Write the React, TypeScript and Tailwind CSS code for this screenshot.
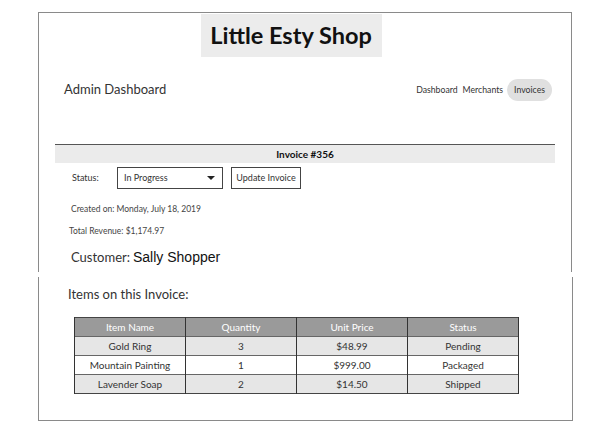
const items = [
  { name: 'Gold Ring', qty: '3', price: '$48.99', status: 'Pending' },
  { name: 'Mountain Painting', qty: '1', price: '$999.00', status: 'Packaged' },
  { name: 'Lavender Soap', qty: '2', price: '$14.50', status: 'Shipped' },
];

export default function App() {
  return (
    <div className="min-h-[445px] w-[604px] bg-white pt-3 font-['Lato',sans-serif] text-[#333]">
      {/* upper half of the page */}
      <div className="ml-[38px] w-[534px] border-x-[1.5px] border-t-[1.5px] border-[#8a8a8a] pb-[5px]">
        <div className="flex justify-center pt-[1px]">
          <div className="ml-[-28px] flex h-[43px] w-[181px] items-center justify-center bg-[#ececec]">
            <h1 className="text-[23.5px] font-bold text-[#111]">Little Esty Shop</h1>
          </div>
        </div>

        <div className="mt-[22px] flex h-[22px] items-center justify-between pl-[25px] pr-[19px]">
          <div className="text-[13px] text-[#333]">Admin Dashboard</div>
          <nav className="flex items-center text-[8.7px] text-[#333]">
            <span className="mr-[5px]">Dashboard</span>
            <span className="mr-[4px]">Merchants</span>
            <span className="flex h-[22px] items-center rounded-full bg-[#e0e0e0] px-[7px]">Invoices</span>
          </nav>
        </div>

        <div className="mx-[16px] mt-[43px] h-[19px] border-t border-[#555] bg-[#ebebeb] text-center text-[10px] leading-[18px] font-bold text-[#111]">
          Invoice #356
        </div>

        <div className="mt-[4px] flex h-[22px] items-center pl-[33px] text-[9px]">
          <span className="w-[45px]">Status:</span>
          <div className="flex h-[22px] w-[106px] items-center justify-between border border-[#444] pl-[6px] pr-[7px]">
            <span>In Progress</span>
            <svg width="8" height="4" viewBox="0 0 8 4">
              <polygon points="0,0 8,0 4,4" fill="#222" />
            </svg>
          </div>
          <div className="ml-[8px] flex h-[22px] w-[70px] items-center justify-center border border-[#444]">
            Update Invoice
          </div>
        </div>

        <div className="mt-[14px] pl-[32px] text-[8.5px] leading-[12px] text-[#444]">
          Created on: Monday, July 18, 2019
        </div>
        <div className="mt-[10px] pl-[30px] text-[8.5px] leading-[12px] text-[#444]">Total Revenue: $1,174.97</div>

        <div className="mt-[10px] flex h-[20px] items-baseline pl-[32px] leading-[20px]">
          <span className="text-[13px] text-[#333]">Customer:</span>
          <span className="ml-[3px] font-['Liberation_Sans',sans-serif] text-[14px] text-[#111]">Sally Shopper</span>
        </div>
      </div>

      {/* lower half */}
      <div className="ml-[38px] mt-[5px] w-[535px] border-x-[1.5px] border-b-[1.5px] border-[#8a8a8a] pb-[26px]">
        <div className="pl-[29px] pt-[7px] text-[13px] leading-[20px] text-[#333]">Items on this Invoice:</div>
        <table className="ml-[35px] mt-[13px] w-[445px] border-collapse border border-[#444] text-center text-[10px]">
          <thead>
            <tr className="h-[19px] bg-[#9a9a9a] text-white">
              <th className="w-1/4 border-x-[1.5px] border-[#333] font-normal">Item Name</th>
              <th className="w-1/4 border-x-[1.5px] border-[#333] font-normal">Quantity</th>
              <th className="w-1/4 border-x-[1.5px] border-[#333] font-normal">Unit Price</th>
              <th className="w-1/4 border-x-[1.5px] border-[#333] font-normal">Status</th>
            </tr>
          </thead>
          <tbody>
            {items.map((it, i) => (
              <tr key={it.name} className={`h-[19px] border-t border-[#666] ${i === 1 ? 'bg-white' : 'bg-[#e6e6e6]'}`}>
                <td className="border-x-[1.5px] border-[#333]">{it.name}</td>
                <td className="border-x-[1.5px] border-[#333]">{it.qty}</td>
                <td className="border-x-[1.5px] border-[#333]">{it.price}</td>
                <td className="border-x-[1.5px] border-[#333]">{it.status}</td>
              </tr>
            ))}
          </tbody>
        </table>
      </div>
    </div>
  );
}
